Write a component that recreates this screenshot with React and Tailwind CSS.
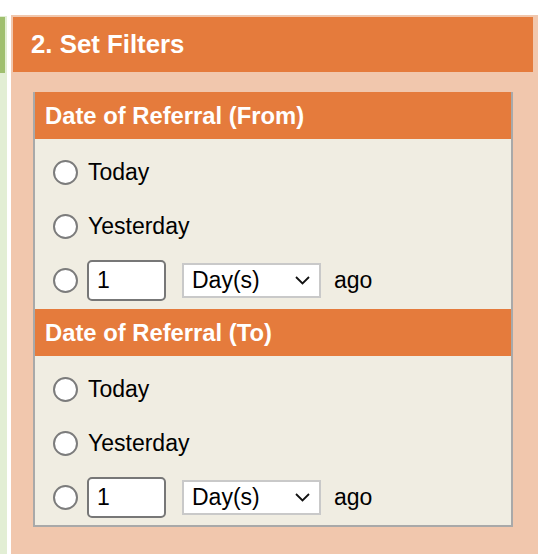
import React from 'react'

function Radio() {
  return <span className="block w-[25px] h-[25px] rounded-full border-2 border-[#7c7c7c] bg-white shrink-0" />
}

function DateGroup({ title, first }) {
  return (
    <div>
      <div className="h-[47px] bg-[#e57b3c] flex items-center pl-[10px] text-white font-bold text-[23.8px]">
        {title}
      </div>
      <div className={'bg-[#f0ede2] pl-[18px] ' + (first ? 'pt-[15px] pb-[8px]' : 'pt-[15px] pb-[7px]')}>
        <div className="flex items-center h-[36px] gap-[10px]">
          <Radio />
          <span>Today</span>
        </div>
        <div className="flex items-center h-[36px] gap-[10px] mt-[18px]">
          <Radio />
          <span>Yesterday</span>
        </div>
        <div className="flex items-center h-[42px] mt-[15px]">
          <Radio />
          <div className="ml-[9px] w-[79px] h-[41px] rounded-[5px] border-2 border-[#777] bg-white flex items-center pl-[8px]">1</div>
          <div className="ml-[16px] w-[139px] h-[35px] border-2 border-[#c9c9c9] bg-white flex items-center pl-[8px] pr-[9px]">
            <span className="flex-1">Day(s)</span>
            <svg width="15" height="9" viewBox="0 0 15 9" fill="none" stroke="#111" strokeWidth="1.8">
              <path d="M1 1l6.5 6.5L14 1" />
            </svg>
          </div>
          <span className="ml-[13px]">ago</span>
        </div>
      </div>
    </div>
  )
}

export default function App() {
  return (
    <div className="w-[538px] h-[554px] overflow-hidden bg-white flex text-[23px] text-black" style={{ fontFamily: '"Liberation Sans", Arial, sans-serif' }}>
      {/* left green strip */}
      <div className="w-[7px] mt-[16px] bg-[#e2eed4] shrink-0">
        <div className="w-[5px] h-[56px] mt-[1px] bg-[#9fbf6e]" />
      </div>
      <div className="w-[4px] shrink-0" />
      {/* filters panel */}
      <div className="flex-1 mt-[15px] bg-[#f1c7ad] pt-[2px] pl-[2px] pr-[5px]">
        <div className="h-[55px] bg-[#e57b3c] flex items-center pl-[18px] text-white font-bold text-[25.8px]">
          2. Set Filters
        </div>
        <div className="mt-[20px] mx-[20px] border-2 border-t-0 border-[#a9a9a9]">
          <DateGroup title="Date of Referral (From)" first />
          <DateGroup title="Date of Referral (To)" />
        </div>
      </div>
    </div>
  )
}
